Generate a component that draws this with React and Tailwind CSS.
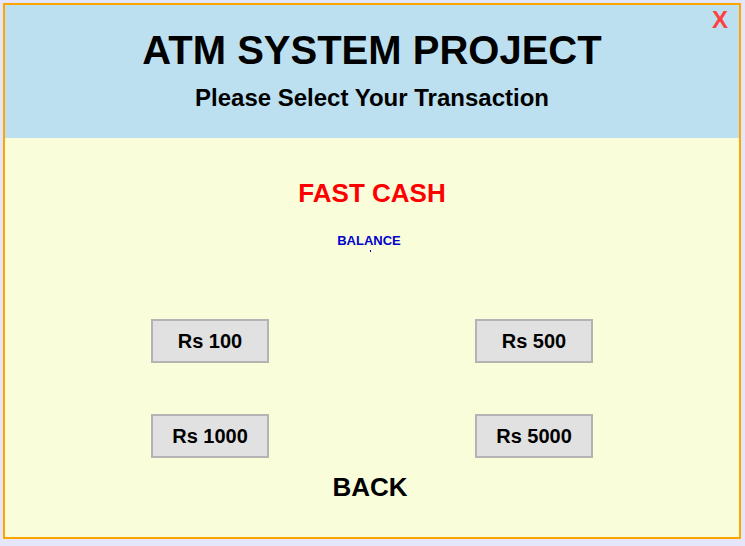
export default function App() {
  const btn =
    "w-[118px] h-[44px] bg-[#e1e1e1] border-2 border-[#b4b4b4] text-[20px] font-bold text-black flex items-center justify-center";
  return (
    <div className="w-[745px] h-[546px] bg-[#e6e6fa] pt-[3px] pl-[3px]" style={{ fontFamily: '"Liberation Sans", Arial, sans-serif' }}>
      <div className="w-[738px] h-[536px] border-2 border-[#ffa500] bg-[#fafdda] flex flex-col">
        <div className="relative h-[133px] bg-[#bde0f0] flex flex-col items-center pt-[25px]">
          <div className="absolute right-[11px] top-[1px] text-[24px] leading-[28px] font-bold text-[#ff4040]">X</div>
          <h1 className="text-[40px] leading-[40px] font-bold text-black">ATM SYSTEM PROJECT</h1>
          <p className="mt-[16px] text-[24px] leading-[24px] font-bold text-black">Please Select Your Transaction</p>
        </div>
        <div className="flex flex-col items-center">
          <div className="mt-[42px] text-[26px] leading-[26px] font-bold text-[#ff0000]">FAST CASH</div>
          <div className="mt-[28px] text-[13px] leading-[13px] font-bold text-[#0000cc] pr-[6px]">BALANCE</div>
          <div className="mt-[3px] w-[1px] h-[2px] bg-[#0000cc] mr-[4px]"></div>
        </div>
        <div className="mt-[67px] flex justify-between px-[146px]">
          <button className={btn}>Rs 100</button>
          <button className={btn}>Rs 500</button>
        </div>
        <div className="mt-[51px] flex justify-between px-[146px]">
          <button className={btn}>Rs 1000</button>
          <button className={btn}>Rs 5000</button>
        </div>
        <div className="mt-[16px] text-center text-[26px] leading-[26px] font-bold text-black pr-[4px]">BACK</div>
      </div>
    </div>
  );
}
